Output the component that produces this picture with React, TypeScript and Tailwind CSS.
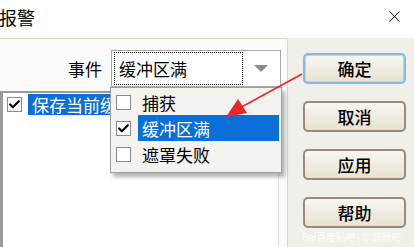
import { Check, X } from 'lucide-react'

const font = { fontFamily: '"Noto Sans CJK SC", "Noto Sans", sans-serif' }

const buttons = ['确定', '取消', '应用', '帮助']

function Box({ checked = false }: { checked?: boolean }) {
  return (
    <span className="flex h-[15px] w-[15px] shrink-0 items-center justify-center border border-[#8a8a8a] bg-white">
      {checked && <Check className="h-[13px] w-[13px] text-black" strokeWidth={4} />}
    </span>
  )
}

export default function App() {
  return (
    <div
      className="relative h-[247px] w-[414px] overflow-hidden bg-white text-black"
      style={font}
    >
      {/* Title bar */}
      <div className="flex h-[38px] items-center justify-between pr-[10px]">
        <span className="-ml-[1px] -mt-[4px] text-[18px] leading-none">报警</span>
        <X className="-mt-[6px] h-[19px] w-[19px] text-[#222]" strokeWidth={1.3} />
      </div>

      <div className="flex h-[209px]">
        {/* Tab page */}
        <div className="flex w-[288px] flex-col rounded-tr-[3px] border-t border-r border-[#d9d5cb] bg-[#fbfbf9]">
          <div className="mt-[11px] flex h-[37px] items-center">
            <span className="ml-[68px] w-[43px] text-[17px] leading-none">事件</span>
            <div className="flex h-[37px] w-[170px] items-center border border-[#a8a8a8] bg-white pl-[2px]">
              <div className="flex h-[33px] w-[129px] items-center border border-dotted border-black pl-[4px] text-[17px] leading-none">
                缓冲区满
              </div>
              <span className="ml-[11px] h-0 w-0 border-x-[7px] border-t-[7px] border-x-transparent border-t-[#8c8c8c]" />
            </div>
          </div>

          {/* List box */}
          <div className="mt-[4px] flex w-[279px] flex-1 flex-col border-t-[2px] border-l-[3px] border-r border-[#9a9a9a] border-r-[#e4e2dc] bg-white">
            <div className="flex h-[21px] items-center pl-[4px] pt-[2px]">
              <Box checked />
              <span className="ml-[6px] flex h-[21px] flex-1 items-center bg-[#0a6fd8] pl-[4px] text-[17px] leading-none text-white">
                保存当前缓冲区
              </span>
            </div>
          </div>
        </div>

        {/* Buttons */}
        <div className="flex flex-1 flex-col items-start bg-[#f1efea] pt-[15px] pl-[15px]">
          {buttons.map((b, i) => (
            <button
              key={b}
              className={`mb-[17px] flex h-[31px] w-[103px] items-center justify-center rounded-[5px] border-2 bg-gradient-to-b from-[#f8f6f0] to-[#e8e2d4] text-[17px] font-medium leading-none ${
                i === 0 ? 'border-[#85b7e8] shadow-[inset_0_0_0_1px_#b9d6f3]' : 'border-[#9a8a7e]'
              }`}
            >
              {b}
            </button>
          ))}
        </div>
      </div>

      {/* Dropdown list */}
      <div className="absolute left-[110px] top-[87px] flex h-[86px] w-[172px] flex-col border border-[#a0a0a0] bg-[#f4f3ef] pt-[1px] shadow-[3px_4px_4px_rgba(0,0,0,0.3)]">
        {[
          { t: '捕获', c: false, sel: false },
          { t: '缓冲区满', c: true, sel: true },
          { t: '遮罩失败', c: false, sel: false },
        ].map((r) => (
          <div key={r.t} className="flex h-[26px] items-center pl-[5px]">
            <Box checked={r.c} />
            <span
              className={`ml-[7px] flex h-[26px] flex-1 items-center pl-[4px] text-[17px] leading-none ${
                r.sel ? 'mr-[2px] bg-[#0a6fd8] text-white' : ''
              }`}
            >
              {r.t}
            </span>
          </div>
        ))}
      </div>

      {/* Red arrow */}
      <svg className="absolute left-0 top-0" width="414" height="247">
        <line x1="302" y1="74" x2="236" y2="110" stroke="#e8262b" strokeWidth="1.5" />
        <polygon points="226,117 238,99 247,113" fill="#e8262b" />
      </svg>

      {/* Watermark */}
      <span className="absolute left-[302px] top-[232px] whitespace-nowrap text-[10px] leading-none tracking-tight text-white/80">
        Bai百度贴吧 | 示波器吧
      </span>
    </div>
  )
}
